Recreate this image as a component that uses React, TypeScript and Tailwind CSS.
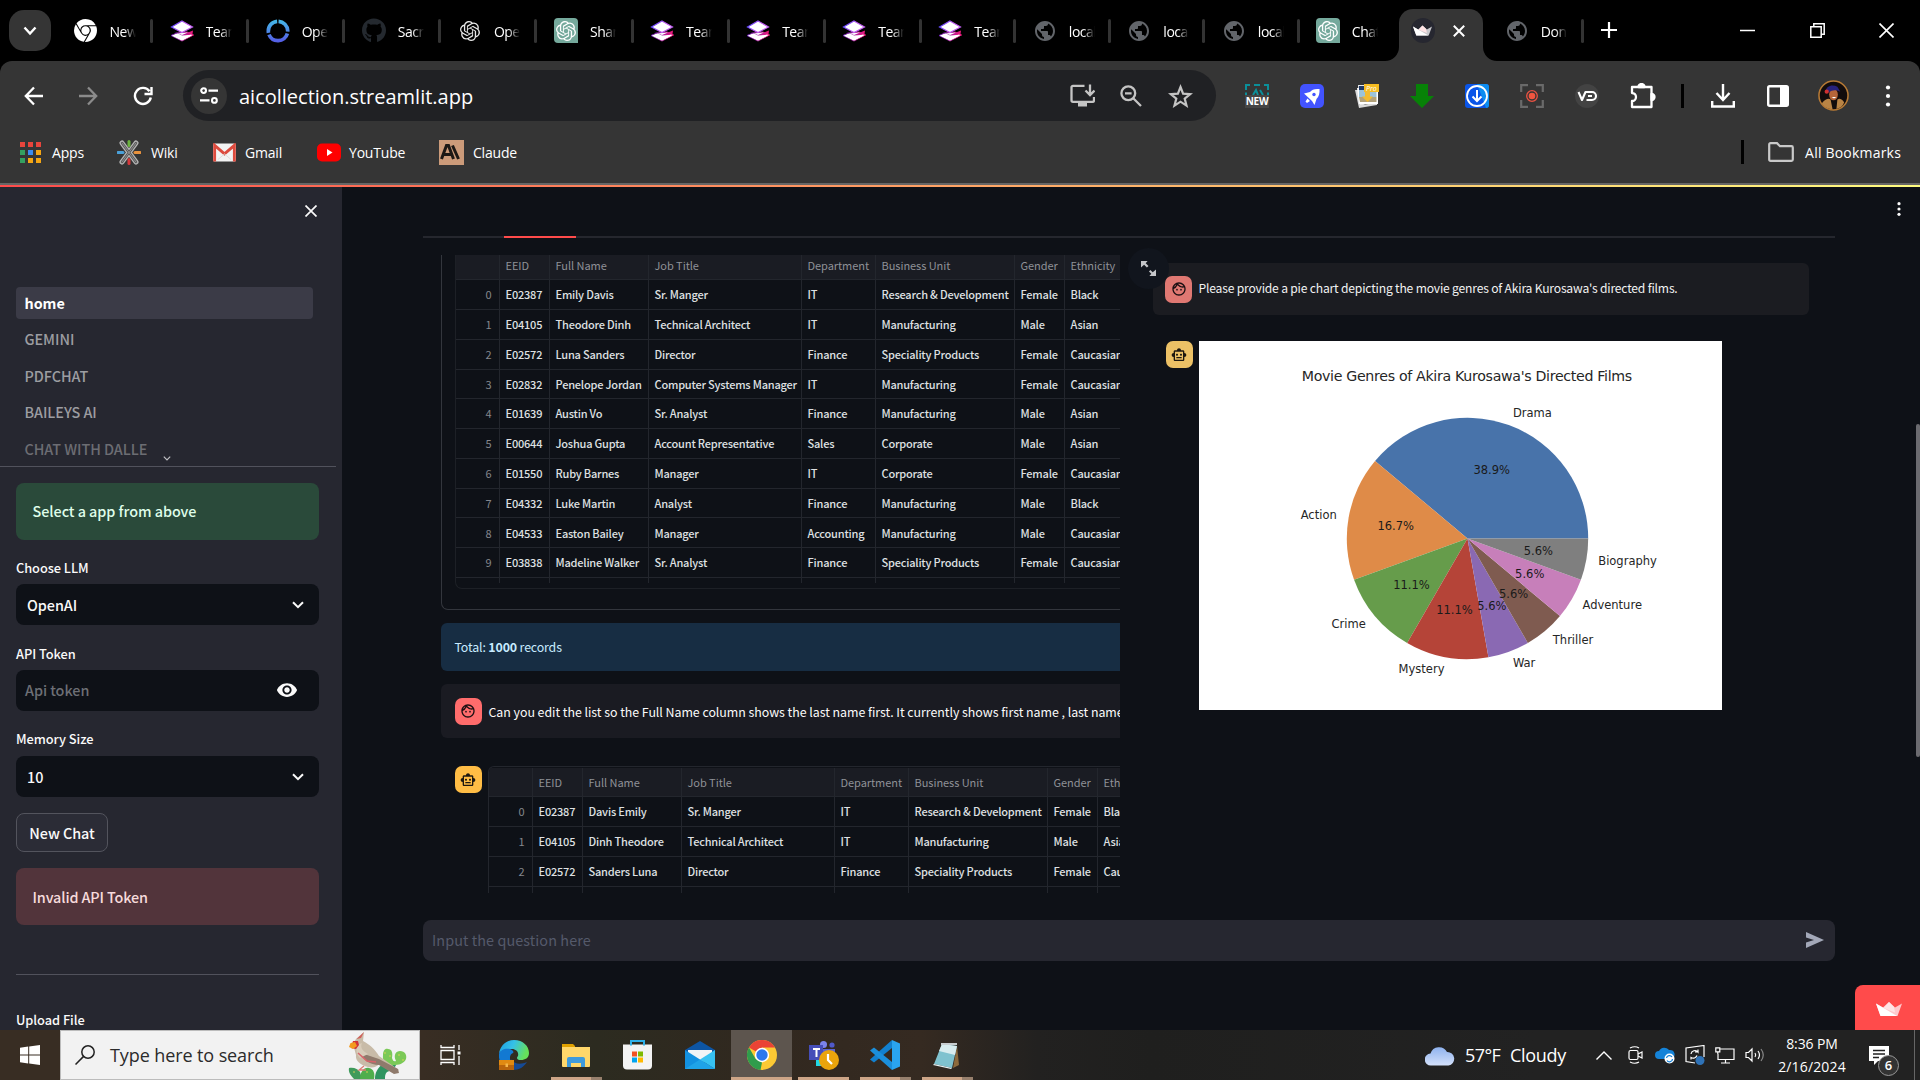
import React from "react";
import { SiOpenai, SiGooglechrome } from "react-icons/si";
import { FaGithub } from "react-icons/fa";
import { MdPublic, MdOutlineFace, MdOutlineSmartToy, MdVisibility } from "react-icons/md";

const SEGOE = "font-['Open_Sans','Noto_Sans',sans-serif]";
const SOURCE = "font-['Noto_Sans_CJK_SC','Noto_Sans',sans-serif]";

/* ---------- Browser chrome ---------- */

const Stack = () => (
  <svg viewBox="0 0 24 24" className="h-6 w-6">
    <defs>
      <linearGradient id="stackTop" x1="0" y1="0" x2="1" y2="0.4">
        <stop offset="0" stopColor="#3a3cff" />
        <stop offset="0.6" stopColor="#c05cf0" />
      </linearGradient>
      <linearGradient id="stackLow" x1="0" y1="0" x2="1" y2="0">
        <stop offset="0" stopColor="#6a1fb8" />
        <stop offset="1" stopColor="#f0187c" />
      </linearGradient>
    </defs>
    <path d="M1 16.500 7 14l10-1 6.500 3L12 22z" fill="#fff" stroke="url(#stackLow)" strokeWidth="1" />
    <path d="M4 12.500 12 16l11-4.500-.5 3.500L13 18z" fill="url(#stackLow)" />
    <path d="M2 16.800 8 14.500l4 2 7-.5 3 .5-10 5z" fill="#fff" />
    <path d="M12 2 22.500 8 12 13.500 1.500 8z" fill="#fff" stroke="url(#stackTop)" strokeWidth="1.200" />
  </svg>
);

const Ring = () => (
  <svg viewBox="0 0 26 26" className="h-[26px] w-[26px]">
    <defs>
      <linearGradient id="ring" x1="0" y1="0" x2="1" y2="0">
        <stop offset="0" stopColor="#5460e6" />
        <stop offset="1" stopColor="#45b4e8" />
      </linearGradient>
    </defs>
    <circle cx="13" cy="13" r="10.500" fill="none" stroke="url(#ring)" strokeWidth="4" strokeDasharray="16.500 2 26 2 17.470 2" strokeDashoffset="-1" transform="rotate(-92 13 13)" />
  </svg>
);

const OpenAIGreen = () => (
  <span className="flex h-[25px] w-6 items-center justify-center rounded-l-[4px] rounded-tr-[4px] bg-[#75a99c]">
    <SiOpenai className="h-5 w-5 text-white" />
  </span>
);

const Globe = () => <MdPublic className="h-[26px] w-[26px] text-[#62656a]" />;

const TabLabel = ({ children }: { children: string }) => (
  <span className="ml-[12px] w-[26px] overflow-hidden whitespace-nowrap pt-[2px] text-[14px] tracking-[-0.5px] text-white [mask-image:linear-gradient(to_right,#000_55%,transparent)]">
    {children}
  </span>
);

const TabItem = ({ icon, label, narrow }: { icon: React.ReactNode; label: string; narrow?: boolean }) => (
  <div className={`flex h-[61px] shrink-0 items-center ${narrow ? "w-[94.5px]" : "w-[96.1px]"}`}>
    <span className="ml-[16.500px] flex w-6 items-center justify-center">{icon}</span>
    <TabLabel>{label}</TabLabel>
    <span className="ml-auto h-6 w-[3px] rounded bg-[#333]" />
  </div>
);

const Crown = ({ className, dim = "#ffc9cd" }: { className?: string; dim?: string }) => (
  <svg viewBox="0 0 26 14" className={className}>
    <path d="M0 1.500 7 5.500 13 0l6 5.500 7-4L21.500 14H4.500z" fill={dim} />
    <path d="M0 1.500 21 14H4.500z" fill="#fff" />
    <path d="M13 0 7.500 6 19 10.500 18 5z" fill="#ffe4e6" />
  </svg>
);

const TabStrip = () => (
  <div className="flex h-[61px] bg-black">
    <div className="ml-[9px] mt-[10px] flex h-[41px] w-[42px] items-center justify-center rounded-[15px] bg-[#353535]">
      <svg viewBox="0 0 14 10" className="h-[10px] w-[14px]" fill="none" stroke="#fff" strokeWidth="2.400">
        <path d="m1.500 1.500 5.500 6 5.500-6" />
      </svg>
    </div>
    <div className="ml-[6px] flex">
      <TabItem icon={<SiGooglechrome className="h-[23px] w-[23px] text-white" />} label="New Tab" />
      <TabItem icon={<Stack />} label="Team" />
      <TabItem icon={<Ring />} label="Open" />
      <TabItem icon={<FaGithub className="h-[25px] w-[25px] text-[#24292f]" />} label="Sacred" />
      <TabItem icon={<SiOpenai className="h-5 w-5 text-[#e8e8e8]" />} label="OpenAI" />
      <TabItem icon={<OpenAIGreen />} label="Share" />
      <TabItem icon={<Stack />} label="Team" />
      <TabItem icon={<Stack />} label="Team" />
      <TabItem icon={<Stack />} label="Team" />
      <TabItem narrow icon={<Stack />} label="Team" />
      <TabItem narrow icon={<Globe />} label="localhost" />
      <TabItem narrow icon={<Globe />} label="localhost" />
      <TabItem narrow icon={<Globe />} label="localhost" />
      <div className="flex w-[99px] items-center">
        <span className="ml-[16px] flex w-6 justify-center"><OpenAIGreen /></span>
        <TabLabel>ChatGPT</TabLabel>
      </div>
      <div className="relative mt-[9px] flex h-[52px] w-[84px] items-center rounded-t-[14px] bg-[#353535]">
        <svg viewBox="0 0 14 14" className="absolute bottom-0 left-[-14px] h-[14px] w-[14px]"><path d="M14 0v14H0A14 14 0 0 0 14 0" fill="#353535" /></svg>
        <svg viewBox="0 0 14 14" className="absolute bottom-0 right-[-14px] h-[14px] w-[14px]"><path d="M0 0v14h14A14 14 0 0 1 0 0" fill="#353535" /></svg>
        <span className="mb-[10px] ml-[12px] flex h-[25px] w-6 items-center justify-center rounded-full bg-[#262730]">
          <Crown className="h-[11px] w-[19px]" dim="#c9c9cd" />
        </span>
        <svg viewBox="0 0 12 12" className="mb-[9px] ml-[18px] h-3 w-3" stroke="#fff" strokeWidth="2"><path d="m.8.8 10.400 10.400M11.200.8.8 11.200" /></svg>
      </div>
      <div className="flex w-[101px] items-center">
        <span className="ml-[22px] flex w-6 justify-center"><Globe /></span>
        <TabLabel>Donate</TabLabel>
        <span className="ml-auto h-6 w-[3px] rounded bg-[#333]" />
      </div>
      <svg viewBox="0 0 16 16" className="ml-[17px] mt-[22px] h-4 w-4" stroke="#fff" strokeWidth="2.200"><path d="M8 0v16M0 8h16" /></svg>
    </div>
    <div className="ml-auto mr-[26px] flex gap-[54.500px] pt-[23px]">
      <svg viewBox="0 0 15 15" className="h-[15px] w-[15px]" stroke="#fff" strokeWidth="1.500"><path d="M0 7.500h15" /></svg>
      <svg viewBox="0 0 15 15" className="h-[15px] w-[15px]" stroke="#fff" strokeWidth="1.500" fill="none"><path d="M.8 3.800h10.400v10.400H.8zM3.800 3.800V.8h10.400v10.400h-3" /></svg>
      <svg viewBox="0 0 15 15" className="h-[15px] w-[15px]" stroke="#fff" strokeWidth="1.600"><path d="m.5.5 14 14m0-14-14 14" /></svg>
    </div>
  </div>
);

const Ext = ({ children }: { children: React.ReactNode }) => (
  <div className="flex h-6 w-[55px] items-center justify-start">{children}</div>
);

const Toolbar = () => (
  <div className="bg-black">
    <div className="flex h-[60px] items-start rounded-t-[12px] bg-[#353535] pt-[9px]">
      <div className="flex h-[51px] w-[183px] items-center pl-[24px]">
        <svg viewBox="0 0 20 20" className="h-5 w-5" fill="none" stroke="#fff" strokeWidth="2.300"><path d="M19 10H2M10 1.500 1.800 10 10 18.500" /></svg>
        <svg viewBox="0 0 20 20" className="ml-[34px] h-5 w-5" fill="none" stroke="#8b8b8b" strokeWidth="2.300"><path d="M1 10h17M10 1.500 18.200 10 10 18.500" /></svg>
        <svg viewBox="0 0 20 20" className="ml-[35px] h-5 w-5" fill="none" stroke="#fff" strokeWidth="2.400"><path d="M17.800 11.500A8 8 0 1 1 16.500 5.300M18.500 1v7h-7" /></svg>
      </div>
      <div className="flex h-[51px] w-[1033px] items-center rounded-full bg-[#202124] pl-[8px]">
        <span className="flex h-9 w-9 items-center justify-center rounded-full bg-[#353535]">
          <svg viewBox="0 0 18 17" className="h-[17px] w-[18px]" fill="none" stroke="#fff" strokeWidth="2.100"><circle cx="3.600" cy="3.600" r="2.400" /><path d="M8.500 3.600H18M0 13.400h9.500" /><circle cx="14.400" cy="13.400" r="2.400" /></svg>
        </span>
        <span className="ml-[12px] pt-[2px] text-[20px] text-white">aicollection.streamlit.app</span>
        <div className="ml-auto mr-[23px] flex items-center">
          <svg viewBox="0 0 25 23" className="h-[23px] w-[25px]" fill="none" stroke="#c4c4c4" strokeWidth="2.300"><path d="M14.500 1.800H3A1.500 1.500 0 0 0 1.500 3.300v13A1.500 1.500 0 0 0 3 17.800h19.500a1.500 1.500 0 0 0 1.500-1.500V13M20 .5v9.500M15.500 6.500 20 11l4.500-4.500" /><path d="M8 18h9v4.500H8z" fill="#c4c4c4" stroke="none" /></svg>
          <svg viewBox="0 0 22 22" className="ml-[25px] h-[22px] w-[22px]" fill="none" stroke="#c4c4c4" strokeWidth="2.300"><circle cx="8.300" cy="8.300" r="6.900" /><path d="m13.500 13.500 7.500 7.500M5 8.300h6.600" /></svg>
          <svg viewBox="0 0 25 24" className="ml-[26px] h-6 w-[25px]" fill="none" stroke="#c4c4c4" strokeWidth="2.200"><path d="m12.500 3 2.600 6.600 7.100.5-5.500 4.500 1.800 7-6-3.900-6 3.900 1.800-7-5.500-4.500 7.100-.5z" /></svg>
        </div>
      </div>
      <div className="flex h-[51px] items-center pl-[29px]">
        <Ext>
          <span className="flex w-6 flex-col items-center">
            <svg viewBox="0 0 24 11" className="h-[11px] w-6" fill="none" stroke="#0b8f99" strokeWidth="2"><path d="M1 6V1h4m4 0h6m4 0h4v5M1 8.500V11m22-2.500V11M8 11l3-5 2 5m2-5 3 5" /></svg>
            <span className="h-[13px] w-6 bg-[#454545] text-center text-[10px] font-bold leading-[13px] tracking-[-0.3px] text-white">NEW</span>
          </span>
        </Ext>
        <Ext>
          <svg viewBox="0 0 24 24" className="h-6 w-6"><rect width="24" height="24" rx="5" fill="#4253ff" /><path d="M19.500 5c-5-.5-7.500.5-9.500 3L4 9.500l3.500 3.200L12 17l2.500 4 2-6c2.500-2.500 3.300-5.500 3-10M7.500 14.500 10 17l-3 2-1.500-1.500z" fill="#fff" /><circle cx="14" cy="10.500" r="1.700" fill="#4253ff" /></svg>
        </Ext>
        <Ext>
          <svg viewBox="0 0 24 24" className="h-6 w-6"><path d="M3 1h8l1 18-7 4z" fill="#e9eaec" /><path d="M0 6h3l2 15 17-2v2L4 24z" fill="#dadada" /><path d="M2 4h21v16H4z" fill="#fff" /><path d="M4 6h17.500v7H4z" fill="#9cc3da" /><path d="M4 2h6v4H4z" fill="#203a68" /><path d="M4 13h17.500v5H5z" fill="#b3a27a" /><path d="M9 0h15v8H9z" fill="#f7bd22" /><path d="M10 7h5v5.500h3L12.500 18 7 12.500h3z" fill="#f3bb30" /><text x="11" y="6.500" fontSize="7" fontStyle="italic" fill="#fff">Pro</text></svg>
        </Ext>
        <Ext>
          <svg viewBox="0 0 24 24" className="h-6 w-6"><path d="M6 0h12v12h6L12 24 0 12h6z" fill="#078207" /></svg>
        </Ext>
        <Ext>
          <svg viewBox="0 0 24 24" className="h-6 w-6" fill="none"><rect width="24" height="24" rx="3" fill="#0a55e8" /><path d="M12 0h9a3 3 0 0 1 3 3v18a3 3 0 0 1-3 3z" fill="#0d8df0" /><circle cx="12" cy="12" r="10" stroke="#fff" strokeWidth="1.800" /><path d="M12 6v11M7.500 12.500 12 17l4.500-4.500" stroke="#fff" strokeWidth="2" /></svg>
        </Ext>
        <Ext>
          <svg viewBox="0 0 24 24" className="h-6 w-6" fill="none"><path d="M1.200 8V1.200H8M16 1.200h6.800V8M22.800 16v6.800H16M8 22.800H1.200V16" stroke="#6a6a6a" strokeWidth="2.200" /><circle cx="12" cy="12" r="5.300" stroke="#ec5242" strokeWidth="1.300" /><circle cx="12" cy="12" r="3.300" fill="#f2553f" /></svg>
        </Ext>
        <Ext>
          <svg viewBox="0 0 24 24" className="h-6 w-6" fill="none"><circle cx="12" cy="12" r="12" fill="#434343" /><path d="m3.500 8 3.500 8 3.500-8H17a4 4 0 0 1 0 8h-5.500M13 12h4" stroke="#fff" strokeWidth="2.100" strokeLinejoin="round" /></svg>
        </Ext>
        <Ext>
          <svg viewBox="0 0 26 26" className="h-[26px] w-[26px]" fill="none" stroke="#fff" strokeWidth="2.300" strokeLinejoin="round"><path d="M2 4h19.500v20H2v-6a4 4 0 0 0 0-8z" /><path d="M8.500 4a3 3 0 0 1 6 0zM21.500 11a3 3 0 0 1 0 6z" fill="#fff" /></svg>
        </Ext>
      </div>
      <div className="flex h-[51px] flex-1 items-center">
        <span className="ml-[-4px] h-6 w-[3px] bg-black" />
        <svg viewBox="0 0 24 24" className="ml-[27px] h-6 w-6" fill="none" stroke="#fff" strokeWidth="2.400"><path d="M12 0v15M5.500 9l6.500 7 6.500-7M1.200 17v5.500h21.600V17" /></svg>
        <svg viewBox="0 0 22 22" className="ml-[32px] h-[22px] w-[22px]"><rect x="1.200" y="1.200" width="19.600" height="19.600" rx="1.500" fill="none" stroke="#fff" strokeWidth="2.400" /><path d="M13 1h8v20h-8z" fill="#fff" /></svg>
        <svg viewBox="0 0 32 32" className="ml-[29px] h-[31px] w-[31px]"><circle cx="16" cy="16" r="15" fill="#120c0c" stroke="#b77a35" strokeWidth="1.600" /><path d="M4 24c4-5 7-5 9-4l2 10c-5 0-9-2-11-6M27 23c-3-4-5-4-7-3l-1 10c4-1 7-3 8-7" fill="#b98445" /><ellipse cx="16" cy="15" rx="4.500" ry="6" fill="#b5653a" /><path d="M8 12c0-6 7-8 12-5l3 5c-5-2-8-2-12 1z" fill="#27227c" /><circle cx="9" cy="12" r="2.200" fill="#d03030" /><path d="M14 17.500h5l-2.500 1.600z" fill="#fff" /></svg>
        <svg viewBox="0 0 6 24" className="ml-[36px] h-[24px] w-[6px]" fill="#fff"><circle cx="3" cy="3.500" r="2.100" /><circle cx="3" cy="12" r="2.100" /><circle cx="3" cy="20.500" r="2.100" /></svg>
      </div>
    </div>
  </div>
);

const APP_DOTS = ["#e8453c", "#e8453c", "#e8453c", "#34a160", "#3b8cf0", "#f5a613", "#34a160", "#f5a613", "#f5a613"];

const Bookmarks = () => (
  <div className="flex h-[62px] items-center bg-[#353535] text-[14px] tracking-[-0.2px] text-white">
    <div className="ml-[20px] grid w-[21px] grid-cols-3 gap-x-[3px] gap-y-[3px]">
      {APP_DOTS.map((c, i) => (
        <span key={i} className="h-[5px] w-[5px]" style={{ background: c }} />
      ))}
    </div>
    <span className="ml-[11px] w-[65px]">Apps</span>
    <svg viewBox="0 0 24 24" className="h-[25px] w-6" fill="none" strokeLinecap="round"><path d="m5 2.500 14 19M19 2.500l-14 19" stroke="#b6b6b6" strokeWidth="5" /><path d="m5 2.500 14 19M19 2.500l-14 19" stroke="#555" strokeWidth="2.500" /><path d="m5 2.500 14 19M19 2.500l-14 19" stroke="#aaa" strokeWidth=".7" /><path d="M12 1v4" stroke="#6cb33f" strokeWidth="3" /><path d="M12 19v4" stroke="#d5383c" strokeWidth="3" /><path d="M1 12h5" stroke="#4aa0d8" strokeWidth="3" /><path d="M18 12h5" stroke="#e8923e" strokeWidth="3" /></svg>
    <span className="ml-[10px] w-[62px]">Wiki</span>
    <svg viewBox="0 0 24 19" className="h-[19px] w-[23px]"><rect width="24" height="19" rx="2" fill="#f3f3f3" /><path d="M1.700 19V2l10.300 9L22.300 2v17" fill="none" stroke="#dd4b3e" strokeWidth="3" /><path d="M5 17 12 11l7 6" fill="none" stroke="#ddd" /></svg>
    <span className="ml-[9px] w-[72px]">Gmail</span>
    <svg viewBox="0 0 24 18" className="h-[19px] w-6"><rect width="24" height="18" rx="5" fill="#f00" /><path d="m10 5.500 5.500 3.500-5.500 3.500z" fill="#fff" /></svg>
    <span className="ml-[8px] w-[90px]">YouTube</span>
    <svg viewBox="0 0 25 25" className="h-[25px] w-[25px]"><path d="M0 0h25v25H0z" fill="#cc9b7a" /><path d="m2.500 19 5-13.500h2L14.500 19M5 14.500h7M13.500 5.500l6 13.500" fill="none" stroke="#1c1815" strokeWidth="3" /></svg>
    <span className="ml-[9px]">Claude</span>
    <span className="ml-auto h-6 w-[3px] bg-black" />
    <svg viewBox="0 0 26 20" className="ml-[24px] h-5 w-[26px]" fill="none" stroke="#c9c9c9" strokeWidth="2.200"><path d="M1.200 2.500c0-1 .5-1.300 1.300-1.300h6.500l3 3h11.500c.8 0 1.300.5 1.300 1.300V17.500c0 .8-.5 1.300-1.300 1.300h-21c-.8 0-1.300-.5-1.300-1.300z" /></svg>
    <span className="ml-[11px] mr-[19px] tracking-[0.2px]">All Bookmarks</span>
  </div>
);

/* ---------- Sidebar ---------- */

const Chevron = () => (
  <svg viewBox="0 0 12 8" className="h-2 w-3" fill="none" stroke="#fafafa" strokeWidth="2"><path d="m1 1.200 5 5 5-5" /></svg>
);

const Select = ({ value }: { value: string }) => (
  <div className="flex h-[41px] items-center justify-between rounded-lg bg-[#0e1117] pl-[11px] pr-[15px] text-[14.4px] text-[#fafafa]">
    <span>{value}</span>
    <Chevron />
  </div>
);

const Label = ({ children, className }: { children: string; className: string }) => (
  <div className={`flex h-[20px] items-center text-[12.8px] text-[#fafafa] ${className}`}>{children}</div>
);

const Sidebar = () => (
  <aside className={`h-full w-[342px] shrink-0 overflow-hidden bg-[#262730] font-medium tracking-[-0.05px] ${SOURCE}`}>
    <div className="flex h-[100px] justify-end pr-[25px] pt-[18px]">
      <svg viewBox="0 0 12 12" className="h-3 w-3" stroke="#fafafa" strokeWidth="1.700"><path d="m.5.500 11 11m0-11-11 11" /></svg>
    </div>
    <nav className="relative h-[180px] w-[336px] border-b border-[#51525c] pl-4 text-[14.4px] text-[#9c9da1]">
      <div className="flex h-8 w-[297px] items-center rounded bg-[#3b3b47] pl-[8.500px] font-bold text-white">home</div>
      <div className="mt-[4px] flex h-8 items-center pl-[8.500px]">GEMINI</div>
      <div className="mt-[4.500px] flex h-8 items-center pl-[8.500px]">PDFCHAT</div>
      <div className="mt-[4.500px] flex h-8 items-center pl-[8.500px]">BAILEYS AI</div>
      <div className="mt-[4.500px] flex h-8 items-center pl-[8.500px] text-[#6c6d73]">CHAT WITH DALLE</div>
      <svg viewBox="0 0 8 5" className="absolute bottom-[5px] left-[163px] h-[5px] w-2" fill="none" stroke="#c0c0c4" strokeWidth="1.200"><path d="m.8.6 3.200 3.200L7.200.6" /></svg>
    </nav>
    <div className="mt-4 w-[319px] pl-4">
      <div className="flex h-[57px] items-center rounded-lg bg-[#2a4a3a] pb-[2px] pl-[16.500px] text-[14.400px] text-[#dffde9]">Select a app from above</div>
      <Label className="mt-[18px]">Choose LLM</Label>
      <div className="mt-[6px]"><Select value="OpenAI" /></div>
      <Label className="mt-[19px]">API Token</Label>
      <div className="mt-[6px] flex h-[41px] items-center justify-between rounded-lg bg-[#0e1117] pb-px pl-[9px] pr-[21.500px] text-[14.400px] text-[#6d6f75]">
        <span>Api token</span>
        <MdVisibility className="h-[22px] w-[22px] text-[#fafafa]" />
      </div>
      <Label className="mt-[18px]">Memory Size</Label>
      <div className="mt-[7px]"><Select value="10" /></div>
      <div className="mt-4 flex h-[39px] w-[92px] items-center justify-center rounded-lg border border-[#53545d] bg-[#2b2c36] text-[14.400px] text-[#fafafa]">New Chat</div>
      <div className="mt-4 flex h-[57px] items-center rounded-lg bg-[#52343b] pl-[16.500px] text-[14.400px] tracking-[-0.12px] text-[#f7dbdc]">Invalid API Token</div>
      <div className="mt-[49px] h-px bg-[#51525c]" />
      <Label className="mt-[35px]">Upload File</Label>
    </div>
  </aside>
);

/* ---------- Chat with tables ---------- */

const HEAD = ["", "EEID", "Full Name", "Job Title", "Department", "Business Unit", "Gender", "Ethnicity"];
const ROWS = [
  ["0", "E02387", "Emily Davis", "Sr. Manger", "IT", "Research & Development", "Female", "Black"],
  ["1", "E04105", "Theodore Dinh", "Technical Architect", "IT", "Manufacturing", "Male", "Asian"],
  ["2", "E02572", "Luna Sanders", "Director", "Finance", "Speciality Products", "Female", "Caucasian"],
  ["3", "E02832", "Penelope Jordan", "Computer Systems Manager", "IT", "Manufacturing", "Female", "Caucasian"],
  ["4", "E01639", "Austin Vo", "Sr. Analyst", "Finance", "Manufacturing", "Male", "Asian"],
  ["5", "E00644", "Joshua Gupta", "Account Representative", "Sales", "Corporate", "Male", "Asian"],
  ["6", "E01550", "Ruby Barnes", "Manager", "IT", "Corporate", "Female", "Caucasian"],
  ["7", "E04332", "Luke Martin", "Analyst", "Finance", "Manufacturing", "Male", "Black"],
  ["8", "E04533", "Easton Bailey", "Manager", "Accounting", "Manufacturing", "Male", "Caucasian"],
  ["9", "E03838", "Madeline Walker", "Sr. Analyst", "Finance", "Speciality Products", "Female", "Caucasian"],
];
const ROWS_2 = [
  ["0", "E02387", "Davis Emily", "Sr. Manger", "IT", "Research & Development", "Female", "Black"],
  ["1", "E04105", "Dinh Theodore", "Technical Architect", "IT", "Manufacturing", "Male", "Asian"],
  ["2", "E02572", "Sanders Luna", "Director", "Finance", "Speciality Products", "Female", "Caucasian"],
];
const COLS = "grid grid-cols-[43.5px_50px_99px_153px_74px_139px_50px_90px]";

const Row = ({ cells, head }: { cells: string[]; head?: boolean }) => (
  <div className={`${COLS} ${head ? "bg-[#1a1c23] text-[#8f9197]" : "font-medium text-[#dfe0e2]"}`}>
    {cells.map((c, i) => (
      <div
        key={i}
        className={`flex h-[29.780px] items-center overflow-hidden whitespace-nowrap border-b border-r border-[#23262d] text-[11px] ${
          head ? "tracking-[-0.05px]" : "tracking-[-0.2px]"
        } ${i === 0 ? "justify-end pr-[7px] font-normal text-[#85878d]" : "pl-[6px]"}`}
      >
        {c}
      </div>
    ))}
  </div>
);

const UserAvatar = ({ className }: { className: string }) => (
  <span className={`flex h-[27px] w-[27px] shrink-0 items-center justify-center rounded-[7px] ${className}`}>
    <MdOutlineFace className="h-4 w-4 text-[#1c1013]" />
  </span>
);
const BotAvatar = ({ className }: { className: string }) => (
  <span className={`flex h-[27px] w-[27px] shrink-0 items-center justify-center rounded-[7px] ${className}`}>
    <MdOutlineSmartToy className="h-4 w-4 text-[#1c1710]" />
  </span>
);

const ChatPane = () => (
  <section className="h-[638px] w-[679px] shrink-0 overflow-hidden">
    <div className="h-[355px] w-[760px] rounded-bl-[7px] border-b border-l border-[#33363d] pl-[13px]">
      <div className="h-[334px] rounded-bl-[7px] border-b border-l border-[#1d2026]">
        <div className="h-[328px] overflow-hidden">
          <div className="-mt-[4.500px]">
            <Row head cells={HEAD} />
            {ROWS.map((r) => <Row key={r[0]} cells={r} />)}
            <Row cells={["", "", "", "", "", "", "", ""]} />
          </div>
        </div>
      </div>
    </div>
    <div className="mt-[13px] flex h-[48px] w-[760px] items-center rounded-[6px] bg-[#172d43] pl-[13.500px] pt-px text-[12.400px] tracking-[-0.15px] text-[#c7ebff]">
      <span>Total: <b>1000</b> records</span>
    </div>
    <div className="mt-[13px] flex h-[54px] w-[760px] items-center rounded-[6px] bg-[#1a1b22] pl-[13.500px] text-[12.400px] tracking-[-0.040px] text-[#fafafa]">
      <UserAvatar className="bg-[#ff6c6c]" />
      <span className="ml-[7px] whitespace-nowrap pt-[2px]">Can you edit the list so the Full Name column shows the last name first. It currently shows first name , last name</span>
    </div>
    <div className="mt-[28px] flex items-start pl-[13.500px]">
      <BotAvatar className="bg-[#ffbd45]" />
      <div className="ml-[6.500px] w-[760px] shrink-0 overflow-hidden rounded-tl-[6px] border-l border-t border-[#23262d] pt-[0.500px]">
        <Row head cells={HEAD} />
        {ROWS_2.map((r) => <Row key={r[0]} cells={r} />)}
        <Row cells={["", "", "", "", "", "", "", ""]} />
      </div>
    </div>
  </section>
);

/* ---------- Pie chart ---------- */

const SLICES = [
  { name: "Drama", deg: 140, pct: "38.9%", fill: "#4873aa" },
  { name: "Action", deg: 60, pct: "16.7%", fill: "#df8b48" },
  { name: "Crime", deg: 40, pct: "11.1%", fill: "#669c4b" },
  { name: "Mystery", deg: 40, pct: "11.1%", fill: "#b54438" },
  { name: "War", deg: 20, pct: "5.6%", fill: "#8a69b3" },
  { name: "Thriller", deg: 20, pct: "5.6%", fill: "#7f5b50" },
  { name: "Adventure", deg: 20, pct: "5.6%", fill: "#c77fba" },
  { name: "Biography", deg: 20, pct: "5.6%", fill: "#7f7f7f" },
];
const CX = 268.5;
const CY = 197.5;
const R = 120.7;
const at = (deg: number, r: number) => [CX + r * Math.cos((deg * Math.PI) / 180), CY - r * Math.sin((deg * Math.PI) / 180)];

const Pie = () => {
  let start = 0;
  const parts = SLICES.map((s) => {
    const a = start;
    start += s.deg;
    return { ...s, a, b: start, mid: a + s.deg / 2 };
  });
  return (
    <svg viewBox="0 0 523 369" className="h-[369px] w-[523px] bg-white font-['DejaVu_Sans',sans-serif]">
      <text x={CX - 0.5} y="39.500" textAnchor="middle" fontSize="14.200" fill="#262626" textLength="330.500">Movie Genres of Akira Kurosawa's Directed Films</text>
      {parts.map((p) => {
        const [x1, y1] = at(p.a, R);
        const [x2, y2] = at(p.b, R);
        return <path key={p.name} d={`M${CX} ${CY}L${x1} ${y1}A${R} ${R} 0 0 0 ${x2} ${y2}z`} fill={p.fill} />;
      })}
      {parts.map((p) => {
        const [lx, ly] = at(p.mid, R * 1.1);
        const [tx, ty] = at(p.mid, R * 0.6);
        return (
          <g key={p.name} fontSize="11.500" fill="#262626">
            <text x={lx} y={ly + 3.7} textAnchor={lx < CX ? "end" : "start"}>{p.name}</text>
            <text x={tx - 0.5} y={ty + 3.7} textAnchor="middle" fill="#1a1a1a">{p.pct}</text>
          </g>
        );
      })}
    </svg>
  );
};

const ChartPane = () => (
  <section className="relative ml-[33px] w-[707px] pt-2">
    <div className="flex h-[52px] w-[656px] items-center rounded-[6px] bg-[#1b1c21] pl-[12px] text-[12.100px] tracking-[-0.180px] text-[#f2f2f2]">
      <UserAvatar className="bg-[#e07872]" />
      <span className="ml-[6.500px] whitespace-nowrap pb-px">Please provide a pie chart depicting the movie genres of Akira Kurosawa's directed films.</span>
    </div>
    <div className="mt-[26px] flex items-start pl-[12.500px]">
      <BotAvatar className="bg-[#ecc166]" />
      <div className="ml-[6px]"><Pie /></div>
    </div>
    <span className="absolute left-[-25px] top-[-7px] flex h-[41px] w-[41px] items-center justify-center rounded-full bg-[#11151d]">
      <svg viewBox="0 0 16 16" className="h-[15px] w-[15px]" fill="#c4c5c8"><path d="M0 0h7L5 2.300l3 3L6.300 7l-3-3L0 7zM16 16H9l2-2.300-2.500-2.500L10 9.500l2.500 2.500L16 9z" /></svg>
    </span>
  </section>
);

const Main = () => (
  <main className={`relative flex-1 overflow-hidden bg-[#0e1117] pl-[81px] ${SOURCE}`}>
    <div className="mt-[49px] flex h-[2px] w-[1412px] bg-[#25272e] pl-[81px]">
      <span className="w-[72px] bg-[#ff4b4b]" />
    </div>
    <div className="mt-[17px] flex h-[638px] pl-[18px]">
      <ChatPane />
      <ChartPane />
    </div>
    <div className="mt-[27px] flex h-[41px] w-[1412px] items-center justify-between rounded-lg bg-[#262730] pb-px pl-[9px] pr-[11px] text-[14.400px] text-[#555a6b]">
      <span className="tracking-[0.080px]">Input the question here</span>
      <svg viewBox="0 0 18 16" className="h-4 w-[18px]" fill="#a3a8b8"><path d="M0 0 18 8 0 16v-5.500L8 8 0 5.500z" /></svg>
    </div>
    <svg viewBox="0 0 4 16" className="absolute right-[19px] top-[14px] h-4 w-1" fill="#fafafa"><circle cx="2" cy="2.700" r="1.600" /><circle cx="2" cy="8" r="1.600" /><circle cx="2" cy="13.300" r="1.600" /></svg>
    <span className="absolute right-0 top-[237px] h-[333px] w-1 rounded bg-[#6b6b70]" />
    <span className="absolute bottom-0 right-0 flex h-[45px] w-[65px] items-center justify-center rounded-tl-lg bg-[#ff4b4b] pl-[3px] pt-[2px]">
      <Crown className="h-[14px] w-[26px]" />
    </span>
  </main>
);

/* ---------- Taskbar ---------- */

const Task = ({ w, active, under, tail, children }: { w: string; active?: boolean; under?: string; tail?: boolean; children: React.ReactNode }) => (
  <div className={`flex h-[50px] flex-col items-center ${w} ${active ? "bg-[#5d554e]" : ""}`}>
    <div className="flex h-[47px] items-center pt-[3px]">{children}</div>
    {under && (
      <div className={`flex h-[3px] ${under}`}>
        <span className="flex-1 bg-[#cda587]" />
        {tail && <span className="w-[11px] bg-[#97806d]" />}
      </div>
    )}
  </div>
);

const Bird = () => (
  <svg viewBox="0 0 60 47" className="h-[47px] w-[60px]">
    <path d="M2 36c5-1 9 1 11 4l2 7H7C4 44 1 40 2 36" fill="#3f9a5b" />
    <path d="M13 47c0-7 4-12 9-11s6 6 5 11z" fill="#4fae4c" />
    <path d="M28 47c0-6 2-11 9-16 5-3 10-3 12 0 1 4-4 7-9 9-2 2-2 4-2 7z" fill="#2f9460" />
    <path d="M36 23c0-4 2-7 5-6 4 0 5 4 4 9 1 3 2 4 4 3-3-6 0-10 4-10 5 0 7 4 6 8-2 5-8 6-12 6-6 2-12-2-11-10" fill="#7bc957" />
    <g fill="#e4d456"><circle cx="38" cy="21" r=".8" /><circle cx="43" cy="24" r=".8" /><circle cx="52" cy="23" r=".8" /><circle cx="56" cy="28" r=".8" /><circle cx="20" cy="40" r=".8" /><circle cx="7" cy="40" r=".8" /></g>
    <path d="M17 0 9 7 6 12l3 11c-1 6 5 10 12 12 5 1 9 0 11-3l14 9 6-3-20-14C28 17 22 12 16 9z" fill="#c8bba8" />
    <path d="m14 21 18 6 19 10 1 4-5 1-15-9c-9 0-16-5-18-12" fill="#8f7a6c" />
    <path d="M15 11c-2 4 0 8 6 11l-8 4c-4-4-4-9-3-13z" fill="#d8ccba" />
    <path d="m11 21 9 8 9 1" fill="none" stroke="#d8636a" strokeWidth="1.600" />
    <path d="M17 0 9.500 7l4.500-1z" fill="#d1605a" />
    <path d="M6 9h5l1 4-3 4-5-1z" fill="#d03238" />
    <path d="M3.500 11 8 10l2 4-4 3-4-2z" fill="#f39a1e" />
    <path d="m17 34-5 4h7" fill="none" stroke="#dd7b72" strokeWidth="1.300" />
  </svg>
);

const Taskbar = () => (
  <footer className="flex h-[50px] bg-[linear-gradient(90deg,#382d23_0%,#382d23_22%,#2c2b20_31%,#31281f_40%,#352a21_48%,#222120_54%,#1f1f1e_60%,#222_80%,#222_100%)] text-white">
    <div className="flex w-[60px] items-center justify-center">
      <svg viewBox="0 0 20 20" className="h-5 w-5" fill="#fff"><path d="M0 2.700 8.200 1.600v8H0zM9.200 1.400 20 0v9.600H9.200zM0 10.500h8.200v8L0 17.300zM9.200 10.500H20V20L9.200 18.600z" /></svg>
    </div>
    <div className="flex w-[360px] items-center border border-[#bcbcbc] bg-[#f2f2f2] pl-[14px]">
      <svg viewBox="0 0 20 20" className="h-5 w-5" fill="none" stroke="#222" strokeWidth="1.500"><circle cx="13" cy="7" r="6.200" /><path d="M8.600 11.400.5 19.500" /></svg>
      <span className="ml-[15px] text-[18px] tracking-[-0.1px] text-[#2b2b2b]">Type here to search</span>
      <span className="ml-auto mr-[12px]"><Bird /></span>
    </div>
    <Task w="w-[61px]">
      <svg viewBox="0 0 22 22" className="h-[22px] w-[22px]" fill="none" stroke="#fff" strokeWidth="1.300"><path d="M1 6.500h13v9H1zM1 1v2.500h13V1M1 21v-2.500h13V21M19 1v5M19 12v9" /><path d="M17.500 7.500h3v3h-3z" fill="#fff" stroke="none" /></svg>
    </Task>
    <Task w="w-[65px]">
      <svg viewBox="0 0 30 30" className="h-[30px] w-[30px]">
        <defs>
          <linearGradient id="edge" x1="0" y1="0" x2="1" y2=".3"><stop offset="0" stopColor="#1b9de2" /><stop offset=".5" stopColor="#35c1e8" /><stop offset="1" stopColor="#66e05a" /></linearGradient>
        </defs>
        <path d="M0 14C1 5 8 0 15 0c9 0 15 6 15 13 0 5-4 7-8 7-4 0-5-2-3-4 1-4-2-7-6-7C7 9 1 11 0 14" fill="url(#edge)" />
        <path d="M0 14c1-4 6-6 11-5 3 1 4 3 3 4-3 1-4 5-2 9l3 8C6 30-1 23 0 14" fill="#1279d2" />
        <path d="M12 19c3 5 9 6 16 3-3 5-8 8-14 8z" fill="#164a94" />
        <path d="M0 20h15v10H0z" fill="#b9650c" /><path d="M0 20h15v5H0z" fill="#e08a12" /><path d="M6.500 23.500h2.500V27H6.500z" fill="#f5b64a" />
      </svg>
    </Task>
    <Task w="w-[60px]" under="w-[51px]" tail>
      <svg viewBox="0 0 28 24" className="h-6 w-7"><path d="M0 1h11l2 2v6H0z" fill="#e0a100" /><path d="M0 4h28v19a1 1 0 0 1-1 1H1a1 1 0 0 1-1-1z" fill="#ffd76b" /><path d="M5 24v-8a2 2 0 0 1 2-2h14a2 2 0 0 1 2 2v8h-4v-4H9v4z" fill="#3f9bdc" /></svg>
    </Task>
    <Task w="w-[62px]">
      <svg viewBox="0 0 29 31" className="h-[32px] w-[29px]"><path d="M8 7V1.500h13V7" fill="none" stroke="#2fb0e8" strokeWidth="2" /><path d="M0 5h29v21a4 4 0 0 1-4 4H4a4 4 0 0 1-4-4z" fill="#f3f3f3" /><path d="M8 1.500V6m13-4.500V6" stroke="#2fb0e8" strokeWidth="2" /><path d="M9 12h5v5H9z" fill="#f25022" /><path d="M15 12h5v5h-5z" fill="#7fba00" /><path d="M9 18h5v5H9z" fill="#00a4ef" /><path d="M15 18h5v5h-5z" fill="#ffb900" /></svg>
    </Task>
    <Task w="w-[63px]">
      <svg viewBox="0 0 30 28" className="h-7 w-[30px]"><path d="M0 9 15 0l15 9v6H0z" fill="#0d55a3" /><path d="M3 9h24v8L15 22 3 17z" fill="#f1f4f6" /><path d="m0 9 30 19H0z" fill="#1391e0" /><path d="M30 9 15 18.500 30 28z" fill="#37c2f2" /><path d="m0 28 15-9.500L30 28z" fill="#1fa3e8" /></svg>
    </Task>
    <Task w="w-[61px]" active under="w-[61px]">
      <svg viewBox="0 0 30 30" className="h-[30px] w-[30px]"><circle cx="15" cy="15" r="15" fill="#fcc934" /><path d="M15 15 2 7.500A15 15 0 0 1 28 7.500H15z" fill="#ea4335" /><path d="M2 7.500 8.500 18.800 15 22.500 13.500 30A15 15 0 0 1 2 7.500" fill="#2f9c4c" /><circle cx="15" cy="15" r="7.200" fill="#fff" /><circle cx="15" cy="15" r="5.700" fill="#2b77ee" /></svg>
    </Task>
    <Task w="w-[63px]" under="w-[51px]">
      <svg viewBox="0 0 30 30" className="h-[30px] w-[30px]"><circle cx="14.500" cy="4.500" r="3.500" fill="#7b83eb" /><circle cx="23" cy="5" r="2.600" fill="#5059c9" /><path d="M10 9h16v8H10z" fill="#5b63d0" /><path d="M7 18h8v8H7z" fill="#1fd8e6" /><path d="M0 5h14v15H0z" fill="#464eb8" /><path d="M4 9h7M7.500 9v8" stroke="#fff" strokeWidth="2" /><circle cx="20" cy="20" r="10" fill="#eaa40c" /><path d="M19 14v6l4 4" fill="none" stroke="#fff" strokeWidth="2.200" /></svg>
    </Task>
    <Task w="w-[60px]" under="w-[51px]" tail>
      <svg viewBox="0 0 30 30" className="h-[30px] w-[30px]"><path d="M22 0 30 3.500v23L22 30z" fill="#2aa4f0" /><path d="M22 0v8L4 22.500 0 19.500z" fill="#1280cf" /><path d="M22 30v-8L4 7.500 0 10.500z" fill="#1b8fdc" /></svg>
    </Task>
    <Task w="w-[64px]" under="w-[51px]" tail>
      <svg viewBox="0 0 28 27" className="h-[27px] w-7"><path d="M24 4 26 23l-6 3z" fill="#8d6a3c" /><path d="M9 2 24 4 19 26 1 22z" fill="#7fc2cf" /><path d="M9 2 24 4 22 13 6 9z" fill="#d8ecef" /><path d="M8 1h16v2H8z" fill="#c8cdd0" /><path d="m1 22 18 4-1 1L0 23z" fill="#e9f3f5" /></svg>
    </Task>
    <div className="ml-auto flex items-center">
      <svg viewBox="0 0 30 21" className="h-[21px] w-[30px]"><defs><linearGradient id="cloud" x1="0" y1="0" x2="0" y2="1"><stop offset="0" stopColor="#8fb2ee" /><stop offset="1" stopColor="#d3e0fa" /></linearGradient></defs><path d="M6 20.500a6 6 0 0 1-.5-12A9 9 0 0 1 22 7a6.800 6.800 0 0 1 1.500 13.500z" fill="url(#cloud)" /></svg>
      <span className="ml-[10px] w-[45px] text-[18px] tracking-[-0.6px]">57°F</span>
      <span className="w-[86px] text-[18px] tracking-[-0.3px]">Cloudy</span>
      <svg viewBox="0 0 16 9" className="h-[9px] w-4" fill="none" stroke="#fff" strokeWidth="1.400"><path d="m.5 8.500 7.500-7.500 7.500 7.500" /></svg>
      <svg viewBox="0 0 15 18" className="ml-4 h-[18px] w-[15px]" fill="none" stroke="#fff" strokeWidth="1.200"><rect x="1" y="4.500" width="9" height="9" rx="1.500" /><path d="m10 8 4-2v6l-4-2M2 2q5-2.500 9 0M2 16q5 2.500 9 0" /></svg>
      <svg viewBox="0 0 20 18" className="ml-[12px] h-[18px] w-5"><path d="M4 13A4 4 0 0 1 4 5 6 6 0 0 1 14 4a4.500 4.500 0 0 1 2 9z" fill="#1583d8" /><circle cx="14.500" cy="12.500" r="5" fill="#fff" /><path d="M11.500 12a3 3 0 0 1 5.500-1m.5 2a3 3 0 0 1-5.500 1.500" fill="none" stroke="#1583d8" strokeWidth="1.300" /></svg>
      <svg viewBox="0 0 20 20" className="ml-[10px] h-5 w-5" fill="none" stroke="#fff" strokeWidth="1.200"><path d="M10 18 1 16.500V3l18-2.500V12" /><path d="M6 9a4 4 0 0 1 7-2V4.500M13 7h-3M12 10.500a4 4 0 0 1-6 2v2" /><circle cx="15" cy="15.500" r="4.500" fill="#2f73b8" stroke="none" /></svg>
      <svg viewBox="0 0 20 17" className="ml-[10px] h-[17px] w-5" fill="none" stroke="#fff" strokeWidth="1.200"><path d="M5 2h14v10.500H3V7M10.500 12.500V16M6 16h9M.8.8h4v4h-4zM2.800 5v2" /></svg>
      <svg viewBox="0 0 20 18" className="ml-[10px] h-[18px] w-5" fill="none" stroke="#fff" strokeWidth="1.200"><path d="M1 6.500h2.500L7 3v12l-3.500-3.500H1zM10 7q1.500 2 0 4M13 5q3 4 0 8" /><path d="M16 3q4.500 6 0 12" stroke="#888" /></svg>
      <div className="ml-[9px] mr-px flex w-[76px] flex-col items-center text-[14px] leading-[23px]">
        <span className="tracking-[-0.1px]">8:36 PM</span>
        <span className="tracking-[0.15px]">2/16/2024</span>
      </div>
      <span className="relative ml-[18px] h-[18px] w-5">
        <svg viewBox="0 0 20 20" className="h-5 w-5"><path d="M0 0h20v15H9l-4 4v-4H0z" fill="#fff" /><path d="M4 4.500h12M4 8h12M4 11.500h6" stroke="#222" strokeWidth="1.300" /></svg>
        <span className="absolute left-[9px] top-[9px] flex h-[21px] w-[21px] items-center justify-center rounded-full border border-[#999] bg-[#333] text-[13px] font-semibold">6</span>
      </span>
      <span className="ml-[25px] mr-[5px] h-[50px] w-px bg-[#666]" />
    </div>
  </footer>
);

export default function App() {
  return (
    <div className={`flex h-[1080px] w-[1920px] flex-col overflow-hidden bg-[#0e1117] ${SEGOE}`}>
      <TabStrip />
      <Toolbar />
      <Bookmarks />
      <div className="h-[2px] shrink-0 bg-[#666]" />
      <div className="h-[2px] shrink-0 bg-[linear-gradient(90deg,#ff4b4b,#fffd80)]" />
      <div className="flex h-[843px]">
        <Sidebar />
        <Main />
      </div>
      <Taskbar />
    </div>
  );
}
